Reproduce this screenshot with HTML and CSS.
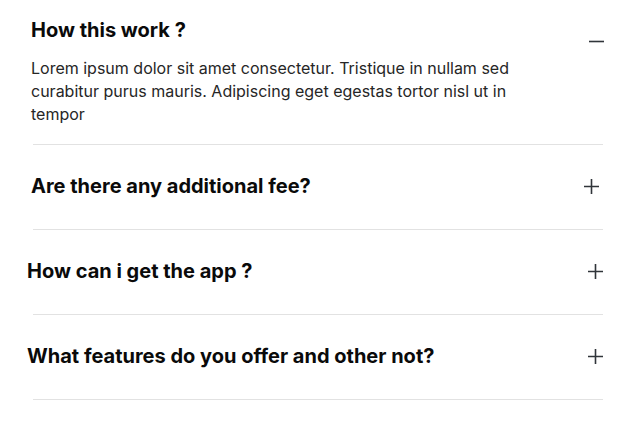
FILE: index.html
```html
<!DOCTYPE html>
<html lang="en">
<head>
<meta charset="utf-8">
<title>FAQ</title>
<link rel="stylesheet" href="styles.css">
</head>
<body>
<section class="faq">
  <div class="faq-item faq-item--open">
    <div class="faq-head faq-head--a">
      <h3 class="faq-q">How this work ?</h3>
      <svg class="icon icon-minus" width="15" height="3" viewBox="0 0 15 3"><path d="M0 1.5H15" stroke="#30353a" stroke-width="1.6"/></svg>
    </div>
    <p class="faq-a">Lorem ipsum dolor sit amet consectetur. Tristique in nullam sed curabitur purus mauris. Adipiscing eget egestas tortor nisl ut in tempor</p>
  </div>
  <div class="faq-item">
    <div class="faq-head faq-head--b">
      <h3 class="faq-q">Are there any additional fee?</h3>
      <svg class="icon" width="15" height="15" viewBox="0 0 15 15"><path d="M0 7.5H15M7.5 0V15" stroke="#30353a" stroke-width="1.6"/></svg>
    </div>
  </div>
  <div class="faq-item">
    <div class="faq-head faq-head--c">
      <h3 class="faq-q">How can i get the app ?</h3>
      <svg class="icon" width="15" height="15" viewBox="0 0 15 15"><path d="M0 7.5H15M7.5 0V15" stroke="#30353a" stroke-width="1.6"/></svg>
    </div>
  </div>
  <div class="faq-item">
    <div class="faq-head faq-head--c">
      <h3 class="faq-q">What features do you offer and other not?</h3>
      <svg class="icon" width="15" height="15" viewBox="0 0 15 15"><path d="M0 7.5H15M7.5 0V15" stroke="#30353a" stroke-width="1.6"/></svg>
    </div>
  </div>
</section>
</body>
</html>
```
FILE: styles.css
```css
* { box-sizing: border-box; }
html, body { margin: 0; padding: 0; background: #fff; }
body { font-family: Inter, "Noto Sans", sans-serif; color: #111; }

.faq {
  margin-left: 33px;
  width: 570px;
}

.faq-item {
  border-bottom: 1px solid #e2e2e2;
  height: 85px;
  display: flex;
  flex-direction: column;
  justify-content: center;
  padding-bottom: 2px;
}

.faq-item--open {
  height: 145px;
  justify-content: flex-start;
  padding: 18px 0 0;
}

.faq-head {
  display: flex;
  align-items: center;
  justify-content: space-between;
}

.faq-head--a { margin: 0 -1px 0 -2px; align-items: flex-end; }
.faq-head--b { margin: 0 4px 0 -2px; }
.faq-head--c { margin: 0 0 0 -6px; }

.faq-q {
  margin: 0;
  font-size: 20px;
  line-height: 24px;
  font-weight: 700;
  color: #0a0a0a;
  letter-spacing: 0;
}

.icon { display: block; flex: none; }
.icon-minus { margin-bottom: -1px; }

.faq-a {
  margin: 15px 0 0 -2px;
  max-width: 500px;
  font-size: 16px;
  line-height: 23px;
  color: #262626;
  letter-spacing: 0;
}
```
